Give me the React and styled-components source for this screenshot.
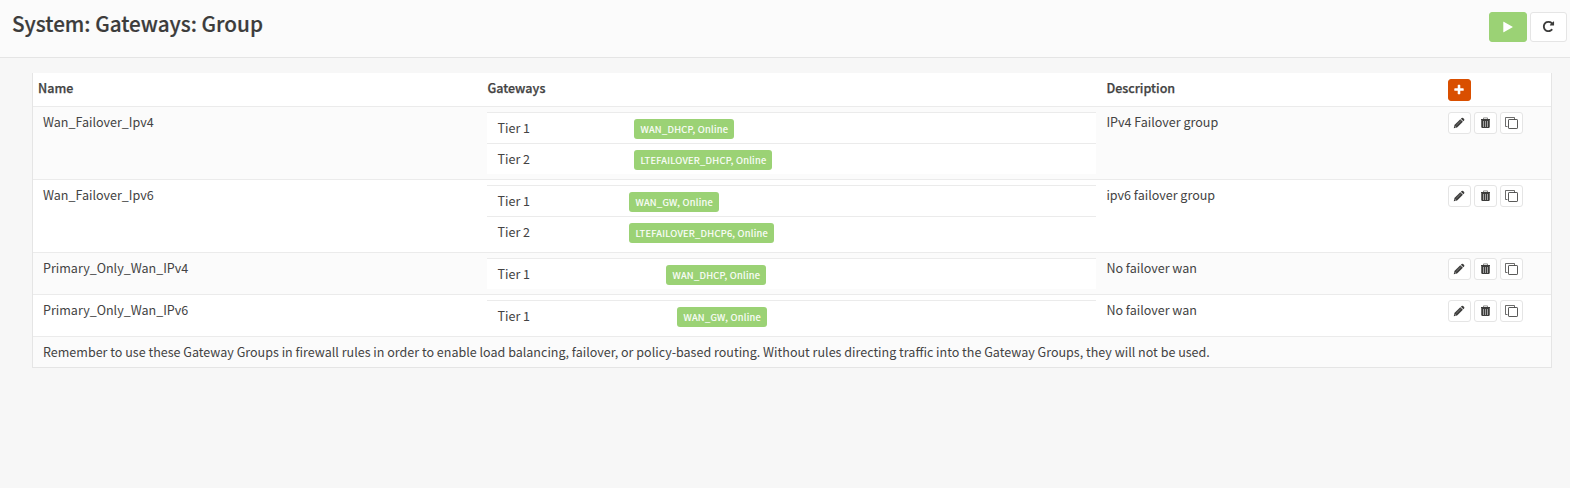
import React from 'react';
import styled, { createGlobalStyle } from 'styled-components';

const Global = createGlobalStyle`
  * { box-sizing: border-box; }
  body { margin: 0; background: #f7f7f7; color: #434343; font-family: "Noto Sans CJK SC", sans-serif; font-size: 12.54px; line-height: 20px; }
`;

const Header = styled.header`
  height: 58px;
  padding: 12px 3px 0 12px;
  display: flex;
  justify-content: space-between;
  align-items: flex-start;
  background: #fbfbfb;
  border-bottom: 1px solid #e5e5e5;
`;
const Title = styled.h1`
  margin: 0;
  color: #3c3c3b;
  font-size: 20.7px;
  line-height: 22px;
  font-weight: 500;
  -webkit-text-stroke: 0.2px currentColor;
`;
const Tools = styled.div`
  display: flex;
  gap: 3px;
`;
const ToolButton = styled.button`
  display: flex;
  align-items: center;
  justify-content: center;
  width: ${p => (p.$primary ? 38 : 37)}px;
  height: 30px;
  padding: ${p => (p.$primary ? '0 0 1px 0' : '0 1px 1px 0')};
  border-radius: 3px;
  border: 1px solid ${p => (p.$primary ? '#9bd275' : '#e5e5e5')};
  background: ${p => (p.$primary ? '#9bd275' : '#fff')};
  color: ${p => (p.$primary ? '#fff' : '#3c3c3b')};
`;
const Panel = styled.main`
  margin: 15px 18px 0 32px;
  border: 1px solid #e5e5e5;
  border-top: 0;
  background: #fff;
`;
const Row = styled.div`
  display: grid;
  grid-template-columns: 454px 609px 352px 1fr;
  padding: 5px 0;
  border-top: 1px solid #ebebeb;
  background: ${p => (p.$striped ? '#fbfbfb' : '#fff')};
`;
const HeadRow = styled(Row)`
  height: 33px;
  border-top: 0;
  font-weight: 500;
  -webkit-text-stroke: 0.25px currentColor;
`;
const HeadCell = styled.div`
  padding-left: ${p => p.$pad || 0}px;
`;
const NameCell = styled.div`
  padding-left: 10px;
`;
const DescriptionCell = styled.div`
  padding-left: 10.4px;
`;
const ActionsCell = styled.div`
  display: flex;
  gap: 3px;
  padding-top: ${p => (p.$head ? 1 : 0)}px;
`;
const IconButton = styled.button`
  display: flex;
  align-items: center;
  justify-content: center;
  width: 23px;
  height: 22px;
  padding: 0 1px 0 0;
  border-radius: 3px;
  border: 1px solid ${p => (p.$accent ? '#d94f00' : '#e5e5e5')};
  background: ${p => (p.$accent ? '#d94f00' : '#fff')};
  color: ${p => (p.$accent ? '#fff' : '#3c3c3b')};
`;
const Tier = styled.div`
  display: grid;
  grid-template-columns: ${p => p.$labelWidth}px 1fr;
  height: 31px;
  padding: 5px 10px 0;
  border-top: 1px solid #ebebeb;
  background: #fff;
`;
const TierLabel = styled.span`
  padding-left: 0.5px;
`;
const Badge = styled.span`
  justify-self: start;
  height: 20px;
  margin-top: 1px;
  padding: 0 6px 0 6.4px;
  border-radius: 3px;
  background: #9bd275;
  color: #fff;
  font-size: 9.4px;
  font-weight: 400;
  letter-spacing: 0.27px;
  -webkit-text-stroke: 0.15px currentColor;
  line-height: 20px;
`;
const Note = styled.div`
  height: 31px;
  padding: 5px 10px;
  border-top: 1px solid #ebebeb;
  background: #fbfbfb;
`;

const paths = {
  plus: 'M1600 736v192q0 40-28 68t-68 28h-416v416q0 40-28 68t-68 28h-192q-40 0-68-28t-28-68v-416h-416q-40 0-68-28t-28-68v-192q0-40 28-68t68-28h416v-416q0-40 28-68t68-28h192q40 0 68 28t28 68v416h416q40 0 68 28t28 68z',
  play: 'M1576 927l-1328 738q-23 13-39.500 3t-16.500-36v-1472q0-26 16.500-36t39.500 3l1328 738q23 13 23 31t-23 31z',
  repeat: 'M1664 256v448q0 26-19 45t-45 19h-448q-42 0-59-40-17-39 14-69l138-138q-148-137-349-137-104 0-198.500 40.500t-163.500 109.500-109.500 163.500-40.500 198.500 40.500 198.500 109.500 163.500 163.500 109.500 198.500 40.500q119 0 225-52t179-147q7-10 23-12 15 0 25 9l137 138q9 8 9.500 20.500t-7.500 22.500q-109 132-264 204.500t-327 72.500q-156 0-298-61t-245-164-164-245-61-298 61-298 164-245 245-164 298-61q147 0 284.500 55.500t244.500 156.500l130-129q29-31 70-14 39 17 39 59z',
};
function Glyph({ name, size }) {
  return <svg width={size} height={size} viewBox="0 0 1792 1792" fill="currentColor"><path d={paths[name]} /></svg>;
}
function PencilIcon() {
  return (
    <svg width="12" height="12" viewBox="0 0 12 12" fill="currentColor">
      <path d="M.8 11.200l.6-3.300 5.900-5.700 2.600 2.500-5.800 5.800z" />
      <path d="M7.900 1.700l.7-.6q.8-.6 1.500 0l1 1q.6.700 0 1.400l-.7.700z" />
      <path d="M3.300 8.300l4.500-4.400" stroke="#fff" strokeWidth=".5" opacity=".6" />
      <path d="M1.600 9.200l1.300 1.200" stroke="#fff" strokeWidth=".7" />
    </svg>
  );
}
function TrashIcon() {
  return (
    <svg width="11" height="12" viewBox="0 0 11 12" fill="none" stroke="currentColor">
      <path d="M3.500 2V.9h4V2" opacity=".55" />
      <path d="M1 2.500h9" />
      <path d="M1.500 3h8v7.500h-8z" fill="currentColor" stroke="none" />
      <path d="M2 3v7.500h7V3" />
      <path d="M3.500 4v6M5.500 4v6M7.500 4v6" stroke="#fff" strokeWidth=".7" opacity=".75" />
    </svg>
  );
}
function CloneIcon() {
  return (
    <svg width="14" height="14" viewBox="0 0 14 14" fill="none" stroke="currentColor">
      <path d="M3.500 10.500h-2v-9h9v2" opacity=".75" />
      <rect x="4.500" y="3.500" width="9" height="9" rx=".6" opacity=".85" />
    </svg>
  );
}

const groups = [
  { name: 'Wan_Failover_Ipv4', label: 137, tiers: ['WAN_DHCP, Online', 'LTEFAILOVER_DHCP, Online'], description: 'IPv4 Failover group' },
  { name: 'Wan_Failover_Ipv6', label: 132, tiers: ['WAN_GW, Online', 'LTEFAILOVER_DHCP6, Online'], description: 'ipv6 failover group' },
  { name: 'Primary_Only_Wan_IPv4', label: 169, tiers: ['WAN_DHCP, Online'], description: 'No failover wan' },
  { name: 'Primary_Only_Wan_IPv6', label: 180, tiers: ['WAN_GW, Online'], description: 'No failover wan' },
];

export default function App() {
  return (
    <>
      <Global />
      <Header>
        <Title>System: Gateways: Group</Title>
        <Tools>
          <ToolButton $primary aria-label="Apply"><Glyph name="play" size={12} /></ToolButton>
          <ToolButton aria-label="Refresh"><Glyph name="repeat" size={13} /></ToolButton>
        </Tools>
      </Header>
      <Panel>
        <HeadRow>
          <HeadCell $pad={5}>Name</HeadCell>
          <HeadCell $pad={0.5}>Gateways</HeadCell>
          <HeadCell $pad={10.4}>Description</HeadCell>
          <ActionsCell $head><IconButton $accent aria-label="Add"><Glyph name="plus" size={12} /></IconButton></ActionsCell>
        </HeadRow>
        {groups.map((g, i) => (
          <Row key={g.name} $striped={i % 2 === 0}>
            <NameCell>{g.name}</NameCell>
            <div>
              {g.tiers.map((t, n) => (
                <Tier key={t} $labelWidth={g.label}><TierLabel>Tier {n + 1}</TierLabel><Badge>{t}</Badge></Tier>
              ))}
            </div>
            <DescriptionCell>{g.description}</DescriptionCell>
            <ActionsCell>
              <IconButton aria-label="Edit"><PencilIcon /></IconButton>
              <IconButton aria-label="Delete"><TrashIcon /></IconButton>
              <IconButton aria-label="Clone"><CloneIcon /></IconButton>
            </ActionsCell>
          </Row>
        ))}
        <Note>Remember to use these Gateway Groups in firewall rules in order to enable load balancing, failover, or policy-based routing. Without rules directing traffic into the Gateway Groups, they will not be used.</Note>
      </Panel>
    </>
  );
}
